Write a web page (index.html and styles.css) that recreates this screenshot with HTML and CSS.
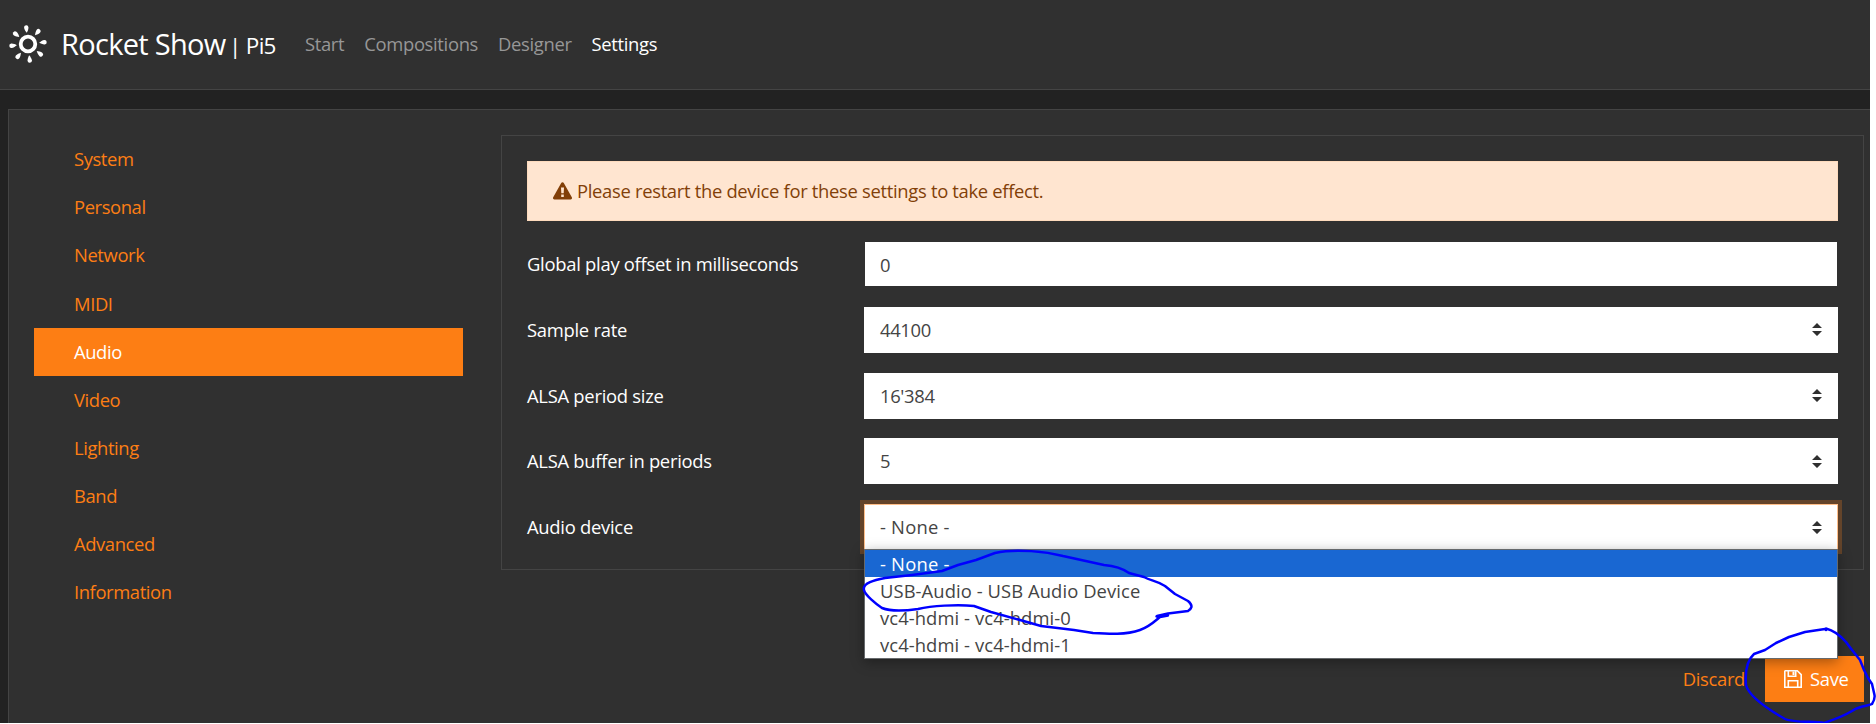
FILE: index.html
```html
<!DOCTYPE html>
<html lang="en">
<head>
<meta charset="utf-8">
<title>Rocket Show</title>
<link rel="stylesheet" href="styles.css">
</head>
<body>
<div class="app">
  <header class="navbar">
    <svg class="logo" width="40" height="40" viewBox="-20 -20 40 40">
      <defs><path id="ray" d="M0-11.2C-.9-12.5-2.2-15-2.2-16.6A2.2 2.2 0 0 1 2.2-16.6C2.2-15 .9-12.5 0-11.2Z"/></defs>
      <circle r="7.3" fill="none" stroke="#fff" stroke-width="3.8"/>
      <g fill="#fff">
        <use href="#ray" transform="rotate(-6)"/><use href="#ray" transform="rotate(39)"/>
        <use href="#ray" transform="rotate(84)"/><use href="#ray" transform="rotate(129)"/>
        <use href="#ray" transform="rotate(174)"/><use href="#ray" transform="rotate(219)"/>
        <use href="#ray" transform="rotate(264)"/><use href="#ray" transform="rotate(309)"/>
      </g>
    </svg>
    <span class="brand">Rocket Show</span>
    <span class="device">| Pi5</span>
    <nav class="links">
      <a>Start</a><a>Compositions</a><a>Designer</a><a class="current">Settings</a>
    </nav>
  </header>
  <main class="card">
    <nav class="side">
      <a>System</a><a>Personal</a><a>Network</a><a>MIDI</a><a class="active">Audio</a>
      <a>Video</a><a>Lighting</a><a>Band</a><a>Advanced</a><a>Information</a>
    </nav>
    <div class="content">
      <section class="panel">
        <div class="alert">
          <svg width="19" height="18" viewBox="0 0 19 18"><path fill="#823f08" fill-rule="evenodd" d="M8.2.9a1.5 1.5 0 0 1 2.6 0l8 14.3a1.5 1.5 0 0 1-1.3 2.3h-16a1.5 1.5 0 0 1-1.3-2.3ZM8 5.5l.3 5.7h2.4l.3-5.700ZM8.200 12.500v2.500h2.600v-2.500Z"/></svg>
          <span>Please restart the device for these settings to take effect.</span>
        </div>
        <div class="row"><label>Global play offset in milliseconds</label><div class="field input">0</div></div>
        <div class="row"><label>Sample rate</label><div class="field">44100<svg class="caret" width="10" height="13" viewBox="0 0 10 13"><path d="M0 5 5 0l5 5ZM0 8h10l-5 5Z"/></svg></div></div>
        <div class="row"><label>ALSA period size</label><div class="field">16'384<svg class="caret" width="10" height="13" viewBox="0 0 10 13"><path d="M0 5 5 0l5 5ZM0 8h10l-5 5Z"/></svg></div></div>
        <div class="row"><label>ALSA buffer in periods</label><div class="field">5<svg class="caret" width="10" height="13" viewBox="0 0 10 13"><path d="M0 5 5 0l5 5ZM0 8h10l-5 5Z"/></svg></div></div>
        <div class="row"><label>Audio device</label>
          <div class="field focus">- None -<svg class="caret" width="10" height="13" viewBox="0 0 10 13"><path d="M0 5 5 0l5 5ZM0 8h10l-5 5Z"/></svg>
            <div class="menu">
              <div class="selected">- None -</div>
              <div>USB-Audio - USB Audio Device</div>
              <div>vc4-hdmi - vc4-hdmi-0</div>
              <div>vc4-hdmi - vc4-hdmi-1</div>
            </div>
          </div>
        </div>
      </section>
      <div class="actions">
        <a class="discard">Discard</a>
        <a class="save"><svg width="18" height="18" viewBox="0 0 18 18" fill="none" stroke="#fff" stroke-width="1.6"><path d="M1.300.8h12l3.900 3.900v12.500H.8V1.300ZM4.300 17v-6.300h9.400V17M4.300 1v5.200h7.400V1"/><path fill="#fff" stroke="none" d="M8.500 1.500h2v3.500h-2Z"/></svg><span>Save</span></a>
      </div>
    </div>
  </main>
  <svg class="ink" width="1876" height="724" viewBox="0 0 1876 724">
    <path d="M1156.500 616.500 1168 615.500 1160 617C1154 622 1149 627 1140 630C1126 635 1109 634 1093 633L1074 630 1041 626 1020 620 991 612 974 606C957 604 931 606 918 609C904 611 892 612 882 608C876 604 865 595 864 590C862 583 875 580 885 578L912 575 942 571 958 565 976 560 995 553C1017 548 1047 552 1063 556L1104 565C1116 566 1122 568 1129 573L1144 577C1151 581 1155 580 1165 586L1175 594 1188 601C1194 606 1191 609 1188 611L1168 613.500 1157 616"/>
    <path d="M1825 629 1805 632 1789 637 1776 643 1765 650 1754 654C1746 661 1745 672 1746 685C1749 697 1771 711 1785 719C1793 723 1816 721 1824 723C1839 718 1847 714 1852 711C1861 705 1869 706 1872 704C1874 701 1875 698 1874.500 695L1872 684 1868 678 1864 670 1860 660 1852 650 1846 642C1839 634 1832 630 1826 628.500V630"/>
  </svg>
</div>
</body>
</html>
```
FILE: styles.css
```css
* { box-sizing: border-box; }
body { margin: 0; background: #fff; font-family: "Open Sans", "Noto Sans", sans-serif; font-size: 18.4px; letter-spacing: -0.33px; color: #fff; }
svg { display: block; flex: none; }
.app { position: relative; width: 1870px; height: 723px; background: #222; display: flex; flex-direction: column; gap: 19px; }
.navbar { height: 90px; background: #303030; border-bottom: 1px solid #444; display: flex; align-items: center; padding: 0 0 2px 8px; white-space: nowrap; }
.brand { margin-left: 13px; width: 168px; font-size: 29px; letter-spacing: -0.7px; }
.device { width: 76px; font-size: 22.5px; padding-top: 3px; letter-spacing: -0.7px; }
.links { display: flex; color: #979797; gap: 20px; }
.links .current { color: #fff; }
.card { flex: 1; margin-left: 8px; background: #303030; border: 1px solid #444; border-width: 1px 0 0 1px; display: flex; padding: 25px 6px 0 25px; }
.side { width: 429px; padding-top: 1px; margin-right: 38px; display: flex; flex-direction: column; letter-spacing: -0.4px; }
.side a { height: 48px; line-height: 46px; padding-left: 40px; color: #fd7e14; }
.side a:nth-child(n+4) { line-height: 48px; }
.side .active { background: #fd7e14; color: #fff; }
.content { flex: 1; }
.panel { height: 435px; border: 1px solid #444; padding: 25px; }
.alert { height: 60px; background: #ffe5d0; border: 1px solid #fedbbd; color: #823f08; display: flex; align-items: center; padding: 0 0 1px 25px; gap: 5px; margin-bottom: 20px; letter-spacing: -0.31px; }
.row { display: flex; height: 46px; margin-bottom: 19.800px; align-items: center; }
.row label { width: 337px; padding-bottom: 1px; letter-spacing: -0.27px; }
.field { flex: 1; height: 46px; line-height: 46px; padding: 0 24px 0 16px; background: #fff; color: #444; display: flex; align-items: center; justify-content: space-between; position: relative; }
.input { height: 44px; margin: 0 1px; padding: 1px 0 0 15px; }
.caret { fill: #303030; margin-right: -8px; }
.focus { border: 1px solid #febe89; padding-left: 15px; padding-right: 23px; box-shadow: 0 0 0 4px #64442a; letter-spacing: 0.2px; }
.menu { position: absolute; z-index: 2; left: -1px; right: -1px; top: 44px; height: 110px; border: 1px solid #66696c; background: #fff; box-shadow: 0 3px 12px rgba(0,0,0,.35); letter-spacing: 0.08px; }
.menu div { height: 27px; line-height: 28px; padding-left: 15px; }
.menu .selected { background: #1967d2; color: #fff; letter-spacing: 0.2px; }
.actions { display: flex; justify-content: flex-end; align-items: center; margin-top: 86px; height: 46px; }
.discard { color: #fd7e14; margin-right: 20px; padding-bottom: 2px; }
.save { background: #fd7e14; width: 99px; height: 46px; display: flex; align-items: center; gap: 8px; padding-left: 19px; }
.save span { padding-bottom: 2px; }
.ink { position: absolute; left: 0; top: 0; z-index: 3; fill: none; stroke: #00f; stroke-width: 2.5; stroke-linejoin: round; stroke-linecap: round; }
```
